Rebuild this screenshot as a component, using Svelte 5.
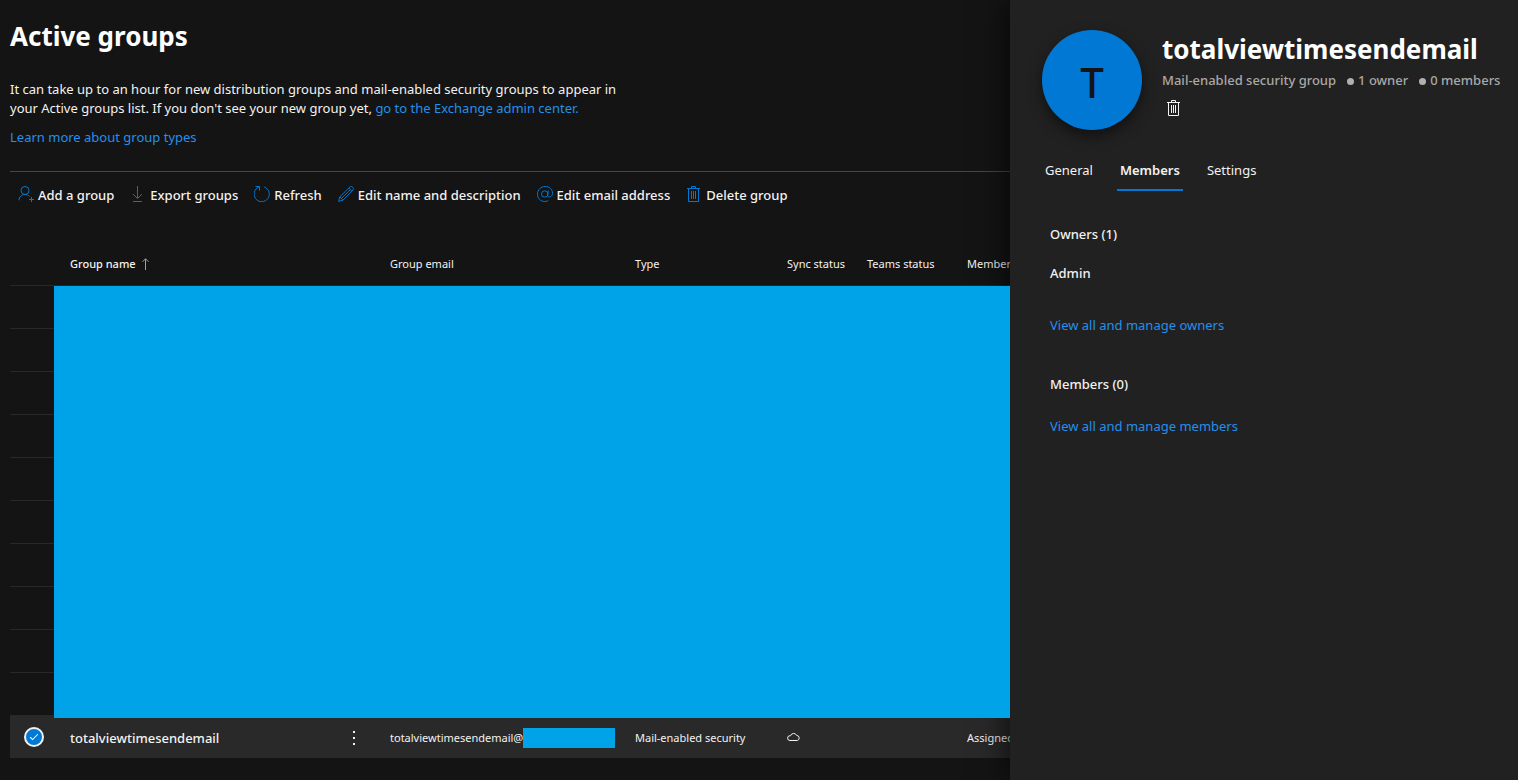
<script lang="ts">
  type Command = { id: string; label: string }

  const commands: Command[] = [
    { id: 'add', label: 'Add a group' },
    { id: 'export', label: 'Export groups' },
    { id: 'refresh', label: 'Refresh' },
    { id: 'edit', label: 'Edit name and description' },
    { id: 'email', label: 'Edit email address' },
    { id: 'delete', label: 'Delete group' }
  ]

  const tabs = ['General', 'Members', 'Settings']
  // hidden rows: one redacted cell spans all of them
  const hiddenRows = Array.from({ length: 10 }, (_, i) => i)

  let activeTab = $state('Members')
  let selected = $state(true)
</script>

{#snippet icon(id: string)}
  <svg class="icon" viewBox="0 0 16 16" width="16" height="16" aria-hidden="true">
    {#if id === 'add'}
      <circle cx="7" cy="4.500" r="4" />
      <path d="M1 14.300C1 11 3.600 8.500 7 8.500c1.900 0 3.500.8 4.600 2.100M13.500 11v5M11 13.500h5" />
    {:else if id === 'export'}
      <path d="M7.500 0v12.500M3 8l4.500 4.500L12 8M3 15.500h9" />
    {:else if id === 'refresh'}
      <path d="M10.200.9A7.600 7.600 0 1 1 5.200.9M1.500.5h4v4" />
    {:else if id === 'edit'}
      <path d="M.6 15.400l1.200-4.600L12 .9c1.700-1.400 4.400 1.200 3 3.100L5 14.200zM1.800 10.800L5 14.200M10.800 2.100l3.100 3.100M4 12L12.300 3.700" />
    {:else if id === 'email'}
      <circle cx="7.700" cy="8" r="3.200" />
      <path d="M11.300 4.500l-.6 4.800c-.2 2.400 4.700 2.300 4.800-2C15.500 3.200 12.300.5 8.200.5 3.700.5.5 4 .5 8.200c0 4.300 3 7.300 7.200 7.300 1.300 0 2.500-.3 3.500-.8" />
    {:else if id === 'delete'}
      <path d="M1 2.500h13M5.500 2.500v-2h4v2M2.500 2.500v13h10v-13M5.500 5v8M7.500 5v8M9.500 5v8" />
    {/if}
  </svg>
{/snippet}

<div class="page">
  <main>
    <h1>Active groups</h1>
    <p class="intro">
      It can take up to an hour for new distribution groups and mail-enabled security groups to appear in
      your Active groups list. If you don't see your new group yet,
      <a href="#exchange">go to the Exchange admin center.</a>
    </p>
    <p class="intro"><a href="#types">Learn more about group types</a></p>

    <div class="toolbar" role="toolbar" aria-label="Group actions">
      {#each commands as command (command.id)}
        <button type="button" class="command">
          {@render icon(command.id)}
          <span>{command.label}</span>
        </button>
      {/each}
    </div>

    <table>
      <colgroup>
        <col class="c-check" />
        <col class="c-name" />
        <col class="c-email" />
        <col class="c-type" />
        <col class="c-sync" />
        <col class="c-teams" />
        <col class="c-membership" />
      </colgroup>
      <thead>
        <tr>
          <th aria-label="Selected"></th>
          <th class="sorted" aria-sort="ascending">
            Group name
            <svg class="sort" viewBox="0 0 7 12" width="7" height="12" aria-hidden="true">
              <path d="M3.500 12V.8M.5 3.800l3-3 3 3" />
            </svg>
          </th>
          <th>Group email</th>
          <th>Type</th>
          <th>Sync status</th>
          <th>Teams status</th>
          <th>Membership</th>
        </tr>
      </thead>
      <tbody>
        {#each hiddenRows as row (row)}
          <tr>
            <td></td>
            {#if row === 0}
              <td class="redacted" colspan="6" rowspan={hiddenRows.length}><div class="cover"></div></td>
            {/if}
          </tr>
        {/each}
        <tr class="group" class:selected>
          <td class="check">
            <input type="checkbox" aria-label="Select totalviewtimesendemail" bind:checked={selected} />
          </td>
          <td>
            <div class="name">
              <span>totalviewtimesendemail</span>
              <button type="button" class="more" aria-label="More actions">
                <svg viewBox="0 0 2 14" width="2" height="14" aria-hidden="true">
                  <path d="M0 0h2v2H0zM0 6h2v2H0zM0 12h2v2H0z" />
                </svg>
              </button>
            </div>
          </td>
          <td>
            <div class="email"><span>totalviewtimesendemail@</span><i class="mask"></i></div>
          </td>
          <td>Mail-enabled security</td>
          <td>
            <svg class="cloud" viewBox="0 0 13 9" width="13" height="9" role="img" aria-label="In cloud">
              <path d="M3 8.500a2.300 2.300 0 0 1 0-4.800h.6a3.200 3.200 0 0 1 6-.3 2.600 2.600 0 0 1 .7 5.100z" />
            </svg>
          </td>
          <td></td>
          <td>Assigned</td>
        </tr>
      </tbody>
    </table>
  </main>

  <aside aria-label="Group details">
    <header>
      <div class="avatar">T</div>
      <div class="summary">
        <h2>totalviewtimesendemail</h2>
        <div class="meta">
          <span>Mail-enabled security group</span>
          <span class="dot">1 owner</span>
          <span class="dot">0 members</span>
        </div>
        <button type="button" class="trash" aria-label="Delete group">{@render icon('delete')}</button>
      </div>
    </header>

    <div class="tabs" role="tablist">
      {#each tabs as tab (tab)}
        <button
          type="button"
          role="tab"
          class="tab"
          class:active={tab === activeTab}
          aria-selected={tab === activeTab}
          onclick={() => (activeTab = tab)}
        >
          {tab}
        </button>
      {/each}
    </div>

    <section>
      <h3>Owners (1)</h3>
      <p class="person">Admin</p>
      <a href="#owners">View all and manage owners</a>
    </section>
    <section>
      <h3>Members (0)</h3>
      <a href="#members">View all and manage members</a>
    </section>
  </aside>
</div>

<style>
  :global(body) {
    margin: 0;
    background: #141414;
  }
  .page {
    display: flex;
    min-height: 100vh;
    overflow: hidden;
    font-family: 'Noto Sans', 'Open Sans', sans-serif;
    font-size: 13px;
    line-height: 19px;
    color: #f3f2f1;
    background: #141414;
  }
  main {
    flex: 1;
    min-width: 0;
    overflow: hidden;
    padding: 18px 0 0 10px;
    box-sizing: border-box;
  }
  h1,
  h2 {
    margin: 0;
    font-size: 26px;
    line-height: 36px;
    font-weight: 700;
    color: #fff;
  }
  h1 {
    margin-bottom: 26px;
  }
  .intro {
    max-width: 620px;
    margin: 0 0 10px;
  }
  a {
    color: #2390ec;
    text-decoration: none;
  }
  a:hover {
    text-decoration: underline;
  }
  button {
    padding: 0;
    border: 0;
    background: none;
    font: inherit;
    color: inherit;
    cursor: pointer;
  }
  .icon {
    flex: none;
    fill: none;
    stroke: #0078d4;
    stroke-width: 1;
  }

  .toolbar {
    display: flex;
    gap: 16px;
    margin-top: 24px;
    padding: 11px 8px 13px;
    border-top: 1px solid #484644;
  }
  .command {
    display: flex;
    align-items: center;
    gap: 4px;
    height: 24px;
    font-weight: 500;
    white-space: nowrap;
  }
  .command .icon {
    margin-bottom: 2px;
  }

  table {
    width: 1120px;
    margin-top: 23px;
    table-layout: fixed;
    border-collapse: separate;
    border-spacing: 0;
    font-size: 11px;
    line-height: 16px;
  }
  .c-check {
    width: 44px;
  }
  .c-name {
    width: 320px;
  }
  .c-email {
    width: 245px;
  }
  .c-type {
    width: 152px;
  }
  .c-sync {
    width: 80px;
  }
  .c-teams {
    width: 100px;
  }
  th,
  td {
    box-sizing: border-box;
    height: 43px;
    padding: 0 0 0 16px;
    border-bottom: 1px solid #292827;
    font-weight: 400;
    text-align: left;
    white-space: nowrap;
  }
  .sorted {
    font-weight: 500;
  }
  .sort {
    margin-left: 3px;
    vertical-align: -2px;
    fill: none;
    stroke: #a19f9d;
  }
  .redacted {
    position: relative;
    padding: 0;
    border: 0;
  }
  /* the cover stays above the panel's shadow */
  .cover {
    position: absolute;
    z-index: 1;
    inset: 0 0 -2px;
    background: #00a2e8;
  }
  .group td {
    height: 42px;
    padding-top: 2px;
    border: 0;
  }
  .group .check {
    padding: 0 0 0 14px;
  }
  .selected td {
    background: #292929;
  }
  input[type='checkbox'] {
    display: block;
    appearance: none;
    box-sizing: border-box;
    width: 20px;
    height: 20px;
    margin: 0;
    border: 2px solid #605e5c;
    border-radius: 50%;
  }
  input[type='checkbox']:checked {
    border: 2px solid #f3f2f1;
    background: #0078d4;
  }
  input[type='checkbox']:checked::after {
    content: '';
    display: block;
    width: 7px;
    height: 3px;
    margin: 5px 0 0 4px;
    border: solid #fff;
    border-width: 0 0 1px 1px;
    transform: rotate(-45deg);
  }
  .name {
    display: flex;
    align-items: center;
    justify-content: space-between;
    padding-right: 15px;
    font-size: 13px;
    font-weight: 500;
  }
  .more {
    display: flex;
    padding: 4px;
  }
  .more svg {
    fill: #f3f2f1;
  }
  .email {
    display: flex;
    align-items: center;
  }
  .mask {
    width: 92px;
    height: 20px;
    background: #00a2e8;
  }
  .cloud {
    display: block;
    margin-bottom: 4px;
    fill: none;
    stroke: #f3f2f1;
  }

  aside {
    position: relative;
    flex: none;
    width: 508px;
    box-sizing: border-box;
    padding: 30px 0 0 32px;
    background: #212121;
    box-shadow: 0 0 32px rgba(0, 0, 0, 0.8);
  }
  header {
    display: flex;
    gap: 20px;
  }
  .avatar {
    flex: none;
    width: 100px;
    height: 100px;
    border-radius: 50%;
    background: #0078d4;
    box-shadow: 0 6px 14px rgba(0, 0, 0, 0.5);
    font-size: 42px;
    font-weight: 500;
    line-height: 104px;
    text-align: center;
    color: #141414;
  }
  .summary {
    padding-top: 1px;
    white-space: nowrap;
  }
  .meta {
    display: flex;
    gap: 11px;
    margin-top: 4px;
    font-weight: 500;
    color: #a9a8a7;
  }
  .dot::before {
    content: '';
    display: inline-block;
    width: 7px;
    height: 7px;
    margin-right: 4px;
    border-radius: 50%;
    background: #b3b0ad;
  }
  .trash {
    display: flex;
    margin-top: 10px;
    padding-left: 4px;
  }
  .trash .icon {
    stroke: #f3f2f1;
  }
  .tabs {
    display: flex;
    gap: 21px;
    margin-top: 20px;
  }
  .tab {
    padding: 11px 3px 9px;
    border-bottom: 2px solid transparent;
  }
  .tab.active {
    border-color: #0078d4;
    font-weight: 600;
  }
  section {
    padding-left: 8px;
  }
  section a {
    display: block;
  }
  h3,
  .person {
    margin: 0;
    font-size: 13px;
    line-height: 19px;
    font-weight: 500;
  }
  h3 {
    margin: 34px 0 20px;
  }
  section + section h3 {
    margin: 40px 0 23px;
  }
  .person {
    margin-bottom: 33px;
  }
</style>
